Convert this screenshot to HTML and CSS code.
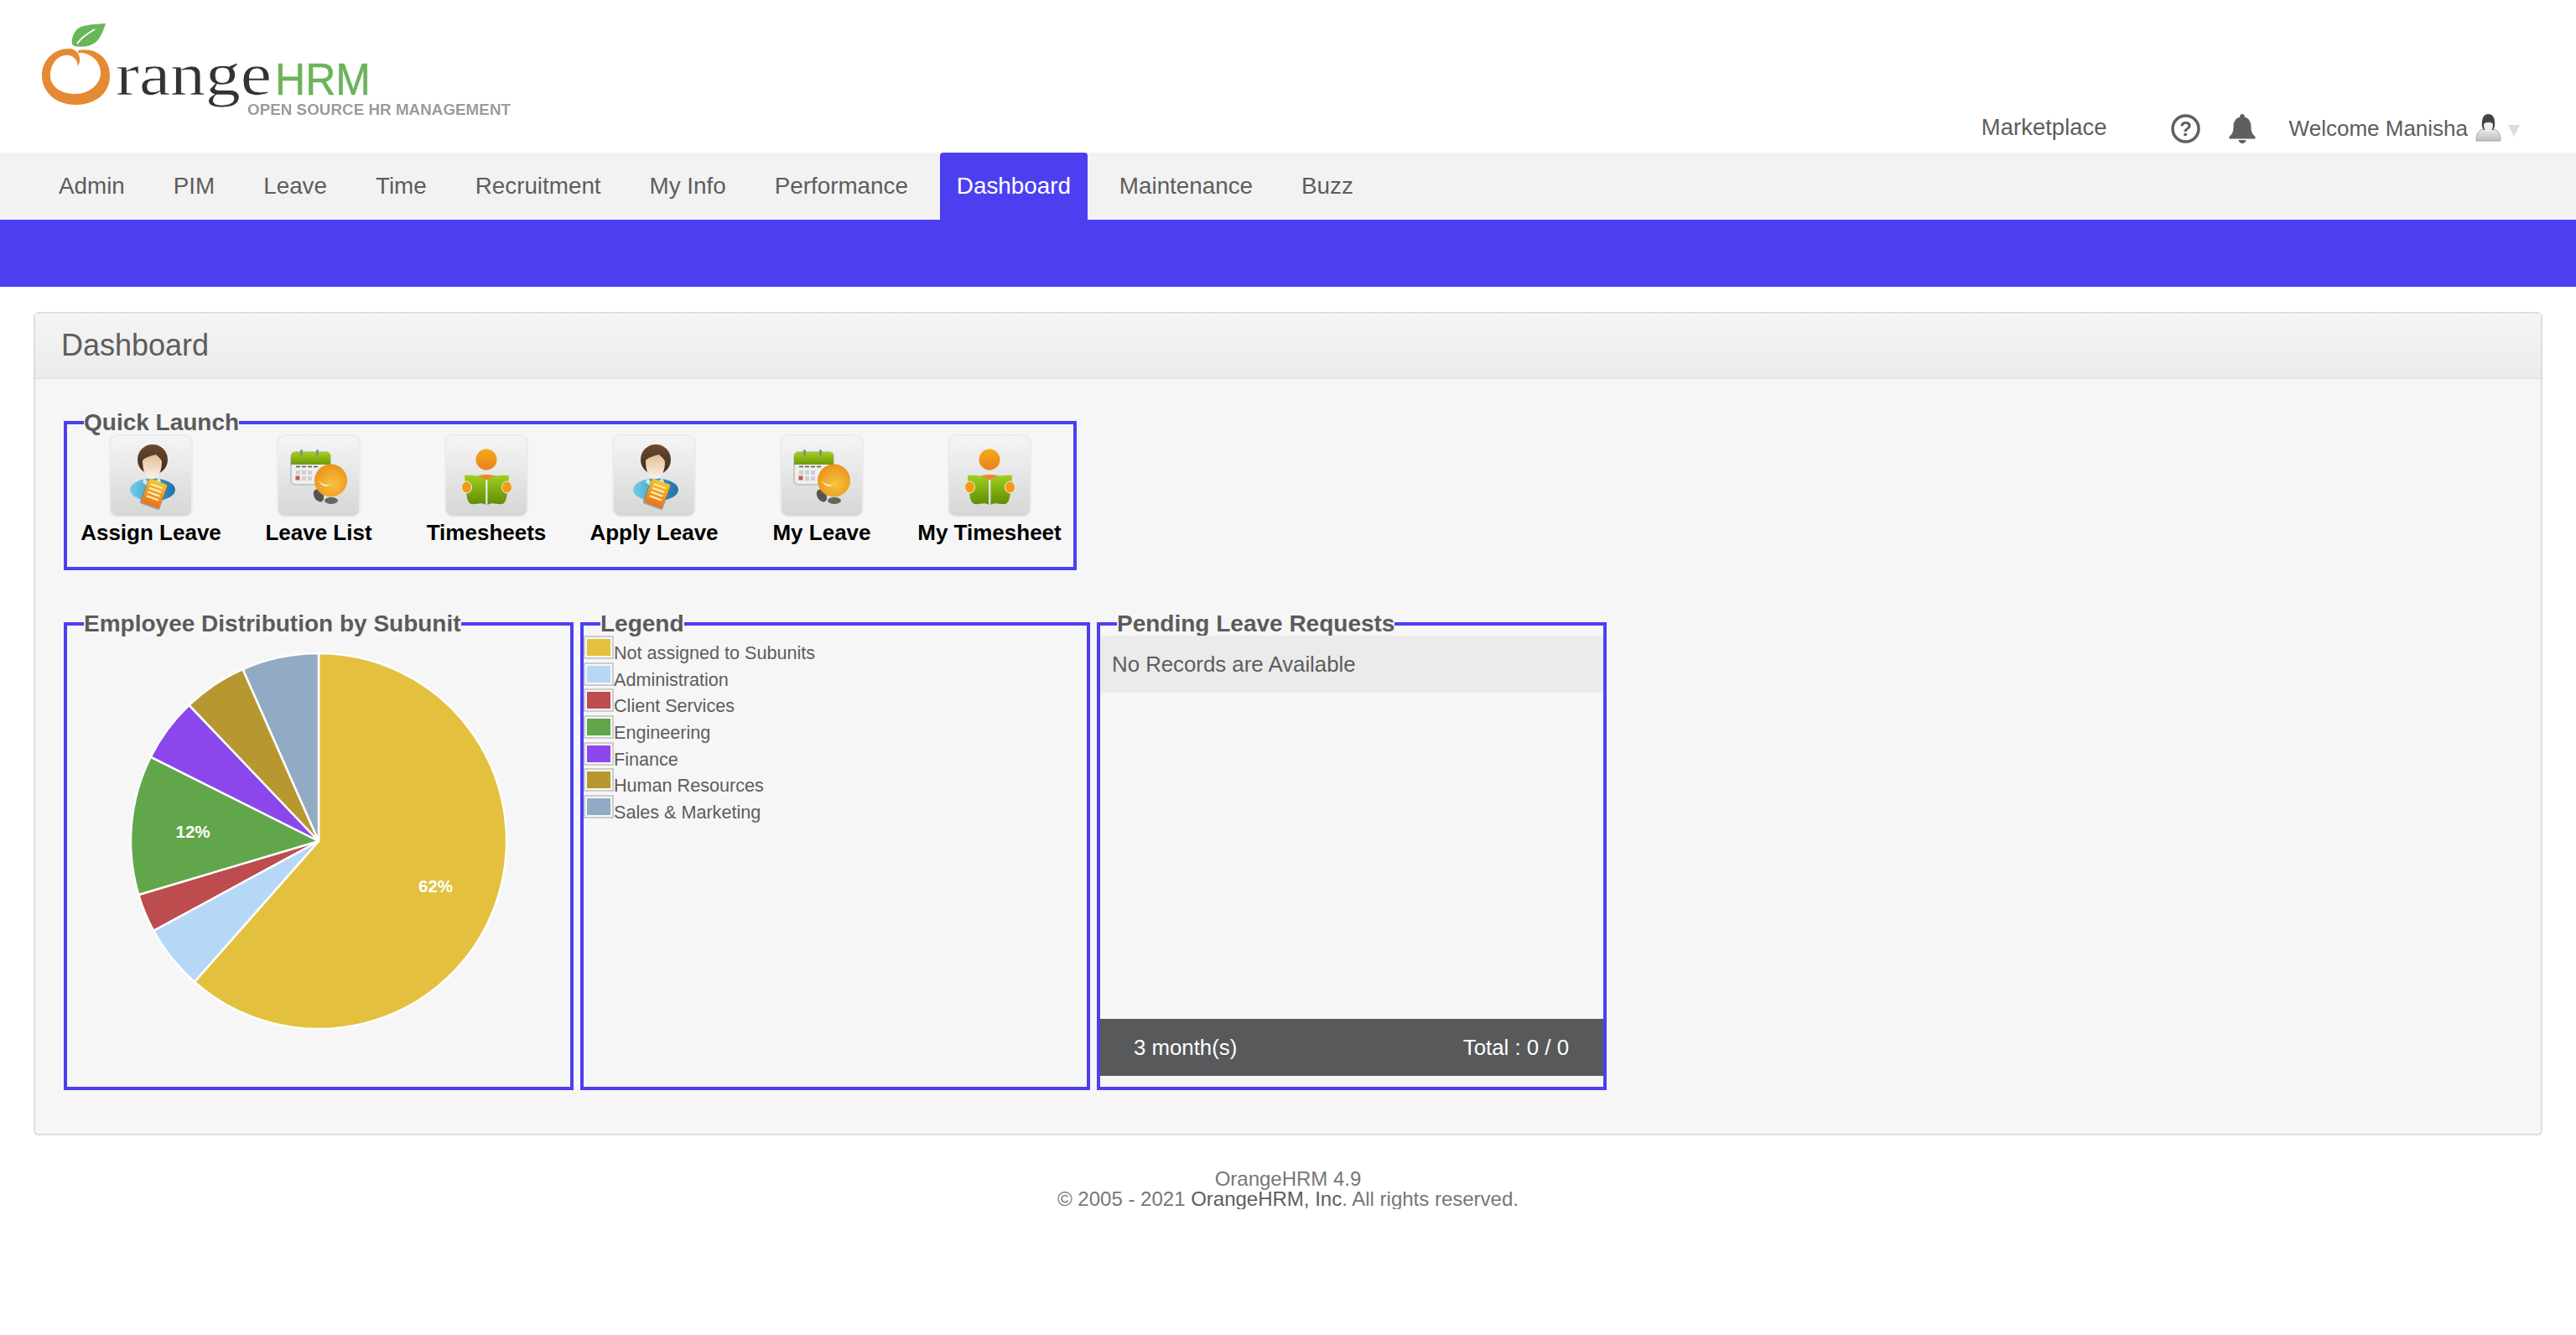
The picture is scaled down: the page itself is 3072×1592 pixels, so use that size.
FILE: index.html
```html
<!DOCTYPE html>
<html lang="en">
<head>
<meta charset="utf-8">
<title>OrangeHRM</title>
<link rel="stylesheet" href="styles.css">
</head>
<body>
<svg class="defs" width="0" height="0" aria-hidden="true">
  <defs>
    <linearGradient id="gHair" x1="0" y1="0" x2="0" y2="1"><stop offset="0" stop-color="#6b4a30"/><stop offset="1" stop-color="#3d2a1c"/></linearGradient>
    <linearGradient id="gFace" x1="0" y1="0" x2="0" y2="1"><stop offset="0" stop-color="#e3bd93"/><stop offset="1" stop-color="#fbf3ea"/></linearGradient>
    <linearGradient id="gBody" x1="0" y1="0" x2="1" y2="0"><stop offset="0" stop-color="#6fd0e6"/><stop offset="1" stop-color="#1f6fa8"/></linearGradient>
    <linearGradient id="gPhone" x1="0" y1="0" x2="0" y2="1"><stop offset="0" stop-color="#f6c52a"/><stop offset="1" stop-color="#e9731a"/></linearGradient>
    <linearGradient id="gCal" x1="0" y1="0" x2="0" y2="1"><stop offset="0" stop-color="#a4cf1a"/><stop offset="1" stop-color="#6f9a10"/></linearGradient>
    <radialGradient id="gBall" cx=".55" cy=".6" r=".65"><stop offset="0" stop-color="#f8c33e"/><stop offset="1" stop-color="#e88f18"/></radialGradient>
    <linearGradient id="gHead" x1="0" y1="0" x2="0" y2="1"><stop offset="0" stop-color="#f4ab16"/><stop offset="1" stop-color="#e9801f"/></linearGradient>
    <linearGradient id="gBook" x1="0" y1="0" x2="0" y2="1"><stop offset="0" stop-color="#a0d01c"/><stop offset="1" stop-color="#5f8a06"/></linearGradient>
    <linearGradient id="gAv" x1="0" y1="0" x2="0" y2="1"><stop offset="0" stop-color="#ececec"/><stop offset="1" stop-color="#bdbdbd"/></linearGradient>

    <symbol id="iconPerson" viewBox="0 0 100 99">
      <ellipse cx="52" cy="66" rx="27" ry="13.500" fill="url(#gBody)"/>
      <path d="M42 52 L50 60 L60 52 L62 57 L50 66 L40 57 Z" fill="#cfe9f3"/>
      <ellipse cx="52" cy="30" rx="18" ry="18" fill="url(#gHair)"/>
      <path d="M40 31 C44 27 52 25 56 24 C60 28 63 30 63 33 C63 45 58 53 51 53 C44 53 40 44 40 31 Z" fill="url(#gFace)"/>
      <g transform="rotate(20 53 71)">
        <rect x="41" y="56" width="25" height="31" rx="2" fill="#6a6a5c" opacity=".55"/>
        <rect x="42" y="55" width="23" height="30" rx="2" fill="url(#gPhone)"/>
        <path d="M46 61H61M46 66H61M46 71H61M46 76H61" stroke="#fdeebc" stroke-width="2.200"/>
      </g>
    </symbol>

    <symbol id="iconCalendar" viewBox="0 0 100 99">
      <rect x="17" y="21" width="47" height="39" rx="5" fill="#efefef" stroke="#bdbdbd" stroke-width="1.500"/>
      <path d="M17 36V26a5 5 0 0 1 5-5h37a5 5 0 0 1 5 5v10Z" fill="url(#gCal)"/>
      <rect x="28" y="18" width="3" height="8" rx="1.500" fill="#8a8f80"/>
      <rect x="47" y="18" width="3" height="8" rx="1.500" fill="#8a8f80"/>
      <path d="M23 38.500H28M30 38.500H35M37 38.500H42M44 38.500H49" stroke="#555" stroke-width="1.600"/>
      <path d="M23 43h5v5h-5ZM30 43h5v5h-5ZM37 43h5v5h-5ZM30 50h5v5h-5ZM37 50h5v5h-5Z" fill="#cfcfcf"/>
      <rect x="22.500" y="49.500" width="5" height="5" fill="#c75b4c"/>
      <ellipse cx="50" cy="73" rx="5.500" ry="8" transform="rotate(-30 50 73)" fill="#55564f"/>
      <ellipse cx="65" cy="79" rx="8" ry="4" fill="#65665f"/>
      <circle cx="64.500" cy="55" r="19.500" fill="url(#gBall)"/>
      <path d="M50 55 C54 60 60 61 64 59 C60 64 53 62 50 55 Z" fill="#fff4d8"/>
    </symbol>

    <symbol id="iconBook" viewBox="0 0 100 99">
      <path d="M34 54 C37 46 63 46 68 54 Z" fill="#ea8a2c"/>
      <circle cx="50" cy="30" r="12.500" fill="url(#gHead)"/>
      <path d="M24 49 C33 48 42 49 49 54 V84 C44 80 38 84 33 83 C28 83 27 76 26 70 C26 62 24 56 24 49 Z" fill="url(#gBook)"/>
      <path d="M77 49 C68 48 58 49 51.500 54 V84 C57 80 63 84 68 83 C73 83 74 76 75 70 C75 62 77 56 77 49 Z" fill="url(#gBook)"/>
      <ellipse cx="26.500" cy="63" rx="6" ry="7" fill="#f39a16" stroke="#f3f3ee" stroke-width="1"/>
      <ellipse cx="74.500" cy="63" rx="6" ry="7" fill="#f39a16" stroke="#f3f3ee" stroke-width="1"/>
    </symbol>
  </defs>
</svg>

<header class="top">
  <svg class="logo" width="640" height="182" viewBox="0 0 640 182" role="img" aria-label="OrangeHRM">
    <path class="logo-ring" d="M93 60 C115 56 132 70 131 92 C130 113 112 125 90 125 C67 125 50 110 50 90 C50 71 65 58 82 58 C92 58 99 68 93 79 C92 70 86 65 78 66 C67 67 60 78 60 90 C60 103 72 112 90 112 C107 112 120 100 120 87 C120 73 108 62 93 63 Z"/>
    <path class="logo-leaf" d="M126 28 C114 29 100 29 93 34 C87 39 85 47 86 53 L89 55 C100 57 112 55 118 46 C122 40 124 34 126 28 Z"/>
    <path class="logo-vein" d="M92 52 C97 45 104 40 113 35"/>
    <text class="logo-range" x="138" y="113" textLength="186" lengthAdjust="spacingAndGlyphs">range</text>
    <text class="logo-hrm" x="328" y="113" textLength="114" lengthAdjust="spacingAndGlyphs">HRM</text>
    <text class="logo-tag" x="295" y="137" textLength="314" lengthAdjust="spacingAndGlyphs">OPEN SOURCE HR MANAGEMENT</text>
  </svg>
  <div class="top-right">
    <a class="market">Marketplace</a>
    <svg class="ico-help" width="35" height="35" viewBox="0 0 35 35" aria-label="Help">
      <circle cx="17.500" cy="17.500" r="15.500" fill="none" stroke="#5f5f5f" stroke-width="3.500"/>
      <text class="help-q" x="17.500" y="26">?</text>
    </svg>
    <svg class="ico-bell" width="32" height="35" viewBox="0 0 32 35" aria-label="Notifications">
      <path fill="#5f5f5f" d="M16 0 a2.800 2.800 0 0 1 2.700 3.600 C24 5 26.500 9.500 26.500 15 C26.500 21 28 24 31.500 27 V29.500 H0.500 V27 C4 24 5.500 21 5.500 15 C5.500 9.500 8 5 13.300 3.600 A2.800 2.800 0 0 1 16 0 Z"/>
      <path fill="#5f5f5f" d="M11.500 31 H20.500 C20 33.500 18 35 16 35 C14 35 12 33.500 11.500 31 Z"/>
    </svg>
    <a class="welcome">Welcome Manisha</a>
    <svg class="ico-avatar" width="33" height="33" viewBox="0 0 33 33" aria-label="User">
      <path d="M2 32 C2 24 4 20 10 18 H23 C29 20 31 24 31 32 Z" fill="url(#gAv)" stroke="#a5a5a5"/>
      <path d="M9 15 C8 5 11 0 16.500 0 C22 0 25 5 24 15 L22 19 H11 Z" fill="#444"/>
      <path d="M11 12 C13 9 20 9 22 12 C22 18 20 21 16.500 21 C13 21 11 18 11 12 Z" fill="#efefef"/>
    </svg>
    <span class="caret"></span>
  </div>
</header>

<nav class="menu">
  <a class="tab">Admin</a>
  <a class="tab">PIM</a>
  <a class="tab">Leave</a>
  <a class="tab">Time</a>
  <a class="tab">Recruitment</a>
  <a class="tab">My Info</a>
  <a class="tab">Performance</a>
  <a class="tab tab-active">Dashboard</a>
  <a class="tab">Maintenance</a>
  <a class="tab">Buzz</a>
</nav>
<div class="subbar"></div>

<main class="main">
  <section class="panel">
    <div class="panel-head"><h1>Dashboard</h1></div>
    <div class="panel-body">
      <fieldset class="box box-quick">
        <legend>Quick Launch</legend>
        <div class="quick-grid">
          <a class="quick"><span class="quick-ico"><svg width="100" height="99"><use href="#iconPerson"/></svg></span><span class="quick-label">Assign Leave</span></a>
          <a class="quick"><span class="quick-ico"><svg width="100" height="99"><use href="#iconCalendar"/></svg></span><span class="quick-label">Leave List</span></a>
          <a class="quick"><span class="quick-ico"><svg width="100" height="99"><use href="#iconBook"/></svg></span><span class="quick-label">Timesheets</span></a>
          <a class="quick"><span class="quick-ico"><svg width="100" height="99"><use href="#iconPerson"/></svg></span><span class="quick-label">Apply Leave</span></a>
          <a class="quick"><span class="quick-ico"><svg width="100" height="99"><use href="#iconCalendar"/></svg></span><span class="quick-label">My Leave</span></a>
          <a class="quick"><span class="quick-ico"><svg width="100" height="99"><use href="#iconBook"/></svg></span><span class="quick-label">My Timesheet</span></a>
        </div>
      </fieldset>

      <div class="widgets">
        <fieldset class="box box-widget">
          <legend>Employee Distribution by Subunit</legend>
          <div class="widget-inner">
            <svg class="pie" width="600" height="538" viewBox="0 0 600 538">
              <g transform="translate(300 245)" stroke="#fff" stroke-width="2.500" stroke-linejoin="round">
                <path fill="#e3c13f" d="M0 0V-224A224 224 0 1 1 -148.100 168Z"/>
                <path fill="#b7d7f7" d="M0 0L-148.100 168A224 224 0 0 1 -196.900 106.900Z"/>
                <path fill="#bd4c4f" d="M0 0L-196.900 106.900A224 224 0 0 1 -214.700 64Z"/>
                <path fill="#61a64b" d="M0 0L-214.700 64A224 224 0 0 1 -200.300 -100.300Z"/>
                <path fill="#8c47ec" d="M0 0L-200.300 -100.300A224 224 0 0 1 -154.500 -162.200Z"/>
                <path fill="#b79830" d="M0 0L-154.500 -162.200A224 224 0 0 1 -90.400 -205Z"/>
                <path fill="#92abc5" d="M0 0L-90.400 -205A224 224 0 0 1 0 -224Z"/>
              </g>
              <text class="pie-label" x="439.500" y="306">62%</text>
              <text class="pie-label" x="150" y="241">12%</text>
            </svg>
          </div>
        </fieldset>

        <fieldset class="box box-widget">
          <legend>Legend</legend>
          <div class="widget-inner legend-list">
            <div class="legend-row"><span class="swatch"><i class="c-yellow"></i></span><span>Not assigned to Subunits</span></div>
            <div class="legend-row"><span class="swatch"><i class="c-sky"></i></span><span>Administration</span></div>
            <div class="legend-row"><span class="swatch"><i class="c-red"></i></span><span>Client Services</span></div>
            <div class="legend-row"><span class="swatch"><i class="c-green"></i></span><span>Engineering</span></div>
            <div class="legend-row"><span class="swatch"><i class="c-purple"></i></span><span>Finance</span></div>
            <div class="legend-row"><span class="swatch"><i class="c-gold"></i></span><span>Human Resources</span></div>
            <div class="legend-row"><span class="swatch"><i class="c-slate"></i></span><span>Sales &amp; Marketing</span></div>
          </div>
        </fieldset>

        <fieldset class="box box-widget">
          <legend>Pending Leave Requests</legend>
          <div class="widget-inner pending">
            <div class="pending-empty">No Records are Available</div>
            <div class="pending-foot"><span>3 month(s)</span><span>Total : 0 / 0</span></div>
          </div>
        </fieldset>
      </div>
    </div>
  </section>
</main>

<footer class="foot">
  <div>OrangeHRM 4.9</div>
  <div>© 2005 - 2021 <a class="foot-link">OrangeHRM, Inc</a>. All rights reserved.</div>
</footer>
</body>
</html>
```
FILE: styles.css
```css
* { box-sizing: border-box; }
html, body { margin: 0; padding: 0; background: #fff; }
body { font-family: "Liberation Sans", Arial, sans-serif; color: #5d5d5d; }
.defs { position: absolute; }

/* Header */
.top { height: 182px; display: flex; justify-content: space-between; align-items: flex-start; }
.logo { display: block; filter: blur(0.4px); }
.logo-ring { fill: #e58a33; }
.logo-leaf { fill: #69b65a; }
.logo-vein { fill: none; stroke: #fff; stroke-width: 2; }
.logo-range { font-family: "Liberation Serif", serif; font-size: 72px; fill: #333; stroke: #fff; stroke-width: 0.7px; }
.logo-hrm { font-family: "Liberation Sans", sans-serif; font-size: 54px; fill: #6cb35a; stroke: #6cb35a; stroke-width: 0.5px; }
.logo-tag { font-family: "Liberation Sans", sans-serif; font-weight: 700; font-size: 19px; fill: #9b9b9b; }

.top-right { display: flex; align-items: flex-start; padding: 136px 67px 0 0; }
.market { font-size: 27.500px; line-height: 32px; }
.ico-help { display: block; margin-left: 76px; }
.help-q { font-family: "Liberation Sans", sans-serif; font-weight: 700; font-size: 24px; fill: #5f5f5f; text-anchor: middle; }
.ico-bell { display: block; margin-left: 34px; }
.welcome { font-size: 26px; line-height: 34px; margin-left: 40px; }
.ico-avatar { display: block; margin-left: 8px; filter: blur(0.4px); }
.caret { width: 0; height: 0; margin: 13px 0 0 7px; border-style: solid; border-width: 14px 7.500px 0; border-color: #ddd transparent transparent; }

/* Menu */
.menu { height: 80px; background: #f2f2f2; display: flex; gap: 18px; padding-left: 50px; }
.tab { font-size: 27.800px; line-height: 80px; padding: 0 20px; color: #5d5d5d; border-radius: 4px 4px 0 0; white-space: nowrap; }
.tab-active { background: #4c3ff0; color: #fff; }
.subbar { height: 80px; background: #4c3ff0; }

/* Panel */
.main { padding: 30px 40px 0; }
.panel { background: #f6f6f6; border: 2px solid #dedede; border-radius: 6px; }
.panel-head { height: 78px; padding-left: 31px; background: linear-gradient(#f5f5f5, #ebebeb); border-bottom: 2px solid #e4e4e4; display: flex; align-items: center; }
.panel-head h1 { margin: 0; font-size: 36px; font-weight: 400; color: #5d5d5d; }
.panel-body { padding: 38px 0 52px 34px; }

/* Fieldsets */
.box { margin: 0; padding: 0; min-width: 0; border: 4px solid #4c3ff0; background: transparent; }
.box legend { margin-left: 20px; padding: 0; font-size: 28px; font-weight: 700; line-height: 28px; color: #5b5b5b; white-space: nowrap; }
.box-quick { width: 1208px; }
.quick-grid { display: grid; grid-template-columns: repeat(6, 200px); height: 158px; }
.quick { display: flex; flex-direction: column; align-items: center; }
.quick-ico { width: 100px; height: 99px; border: 2px solid #ecece8; border-radius: 10px; background: linear-gradient(#f5f5f5, #d6d6d6); }
.quick-ico svg { display: block; margin: -2px; filter: blur(0.5px); }
.quick-label { margin-top: 3px; font-size: 26px; font-weight: 700; line-height: 30px; color: #000; white-space: nowrap; }

.widgets { display: flex; gap: 8px; margin-top: 50px; }
.box-widget { width: 608px; }
.widget-inner { height: 538px; }
.pie { display: block; }
.pie-label { font-family: "Liberation Sans", sans-serif; font-size: 20.500px; font-weight: 700; fill: #fff; text-anchor: middle; }

/* Legend */
.legend-list { display: flex; flex-direction: column; gap: 3.700px; font-size: 21.600px; color: #5d5d5d; }
.legend-row { display: flex; align-items: flex-end; height: 28px; line-height: 22px; white-space: nowrap; }
.legend-row span:last-child { position: relative; top: 4px; }
.swatch { display: block; width: 36px; height: 28px; border: 2px solid #ccc; padding: 2px; flex: none; }
.swatch i { display: block; width: 28px; height: 20px; }
.c-yellow { background: #e3c13f; }
.c-sky { background: #b7d7f7; }
.c-red { background: #bd4c4f; }
.c-green { background: #61a64b; }
.c-purple { background: #8c47ec; }
.c-gold { background: #b79830; }
.c-slate { background: #92abc5; }

/* Pending */
.pending { display: flex; flex-direction: column; }
.pending-empty { height: 68px; line-height: 68px; padding-left: 14px; background: #ebebeb; font-size: 25.800px; color: #5d5d5d; }
.pending-foot { margin: auto 0 13px; height: 68px; padding: 0 41px 0 40px; display: flex; justify-content: space-between; align-items: center; background: #58595b; color: #fff; font-size: 25.800px; }

/* Footer */
.foot { padding-top: 40px; text-align: center; font-size: 24px; line-height: 24px; color: #777; }
.foot-link { color: #5d5d5d; }
```
